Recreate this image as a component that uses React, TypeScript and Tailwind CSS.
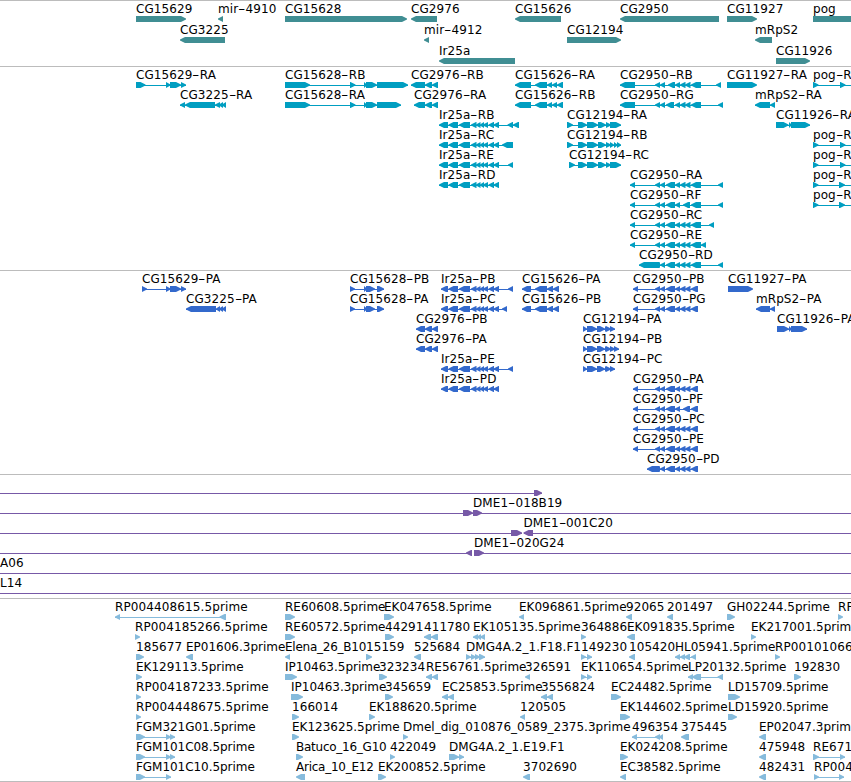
import React from 'react';
import { clsx } from 'clsx';

type Strand = '+' | '-';

// [label, strand, exon start/end pairs]
type Feature = [string, Strand, number[]];

interface TrackData {
  name: string;
  color: string;
  rowClass: string;
  lastClass?: string;
  rows: Feature[][];
}

const VIEW_WIDTH = 851;

// Exons shared between several isoforms
const ir25aCore = [448.5, 458, 459, 470, 471, 476.5, 476, 480.5, 480, 484, 483, 488, 488.5, 494, 493.5, 499];
const cg2950Core = [655, 660, 660, 665, 666, 675, 675, 680, 680, 685.5, 685, 690.5];
const cg2950F = [655, 660, 660, 665, 666, 675, 675, 680, 683, 690];
const cg12194Core = [578, 587, 587, 598, 598, 606, 606, 611];
const cg15626Rna = [515, 531, 535, 547, 547, 552, 552, 557, 557, 563];
const cg15626Cds = [522, 531, 535, 547, 547, 553, 553, 559];
const cg15628Cds = [350, 355, 364, 367, 366, 375, 377, 384];
const cg12194Cds = [583, 587, 587, 597, 597, 605, 605, 608, 606, 611, 610, 615];
const cg2950Cds = [633, 638, ...cg2950Core, 691, 698];

const genes: Feature[][] = [
  [
    ['CG15629', '+', [136, 186]],
    ['mir-4910', '-', [218, 223]],
    ['CG15628', '+', [285, 407]],
    ['CG2976', '-', [411, 437]],
    ['CG15626', '-', [515, 561]],
    ['CG2950', '-', [620, 719]],
    ['CG11927', '+', [727, 757]],
    ['pog', '+', [813, 870]],
  ],
  [
    ['CG3225', '-', [180, 225]],
    ['mir-4912', '-', [424, 429]],
    ['CG12194', '+', [567, 621]],
    ['mRpS2', '-', [755, 772]],
  ],
  [
    ['Ir25a', '-', [439, 515]],
    ['CG11926', '+', [776, 810]],
  ],
];

const transcripts: Feature[][] = [
  [
    ['CG15629-RA', '+', [136, 145.5, 166, 170.5, 170, 181, 181, 186]],
    ['CG15628-RB', '+', [285, 310, 350, 355.5, 364, 367, 366, 377, 377, 408]],
    ['CG2976-RB', '-', [411, 425, 425, 432, 432, 438]],
    ['CG15626-RA', '-', cg15626Rna],
    ['CG2950-RB', '-', [620, 635, 655, 660, 660, 665, 668, 675, 675, 680, 680, 685.5, 685, 690.5, 691, 701, 716, 721]],
    ['CG11927-RA', '+', [727, 757]],
    ['pog-RA', '+', [813, 818.5, 840, 845.5, 870, 880]],
  ],
  [
    ['CG3225-RA', '-', [180, 185, 185, 215, 215, 220, 219, 223, 222, 226]],
    ['CG15628-RA', '+', [285, 310, 350, 355.5, 364, 367, 366, 377, 377, 401]],
    ['CG2976-RA', '-', [414, 425, 425, 432, 432, 438]],
    ['CG15626-RB', '-', cg15626Rna],
    ['CG2950-RG', '-', [620, 635, 655, 660, 660, 665, 666, 674, 675, 680, 680, 685.5, 685, 690.5, 691, 701, 718, 723]],
    ['mRpS2-RA', '-', [755, 770, 770, 775]],
  ],
  [
    ['Ir25a-RB', '-', [439, 448, ...ir25aCore, 507.5, 513, 513, 519]],
    ['CG12194-RA', '+', [567, 573, ...cg12194Core, 610, 621]],
    ['CG11926-RA', '+', [776, 788.5, 789, 791.5, 791, 810]],
  ],
  [
    ['Ir25a-RC', '-', [439, 448, ...ir25aCore, 502, 513]],
    ['CG12194-RB', '+', [567, 573, ...cg12194Core, 610, 614, 614, 617.5, 617, 621]],
    ['pog-RB', '+', [813, 818.5, 840, 845.5, 870, 880]],
  ],
  [
    ['Ir25a-RE', '-', [439, 448, ...ir25aCore, 508, 513]],
    ['CG12194-RC', '+', [569, 575, ...cg12194Core, 610, 621]],
    ['pog-RC', '+', [813, 818.5, 840, 845.5, 870, 880]],
  ],
  [
    ['Ir25a-RD', '-', [439, 448, ...ir25aCore]],
    ['CG2950-RA', '-', [630, 635, ...cg2950Core, 691, 701, 718, 723]],
    ['pog-RD', '+', [813, 818.5, 839, 845, 870, 880]],
  ],
  [
    ['CG2950-RF', '-', [630, 635, ...cg2950F, 691, 701, 718, 723]],
    ['pog-RE', '+', [813, 818.5, 839, 845, 870, 880]],
  ],
  [['CG2950-RC', '-', [630, 635, ...cg2950Core, 691, 701, 709, 714]]],
  [['CG2950-RE', '-', [630, 635, ...cg2950Core, 691, 701, 701, 706]]],
  [['CG2950-RD', '-', [639, 659, ...cg2950Core, 691, 701, 718, 723]]],
];

const cds: Feature[][] = [
  [
    ['CG15629-PA', '+', [142, 147, 166, 170.5, 170, 181, 181, 186]],
    ['CG15628-PB', '+', cg15628Cds],
    ['Ir25a-PB', '-', [441, 448, ...ir25aCore, 508, 513]],
    ['CG15626-PA', '-', cg15626Cds],
    ['CG2950-PB', '-', cg2950Cds],
    ['CG11927-PA', '+', [728, 753]],
  ],
  [
    ['CG3225-PA', '-', [186, 216, 216, 220, 219, 223, 222, 226]],
    ['CG15628-PA', '+', cg15628Cds],
    ['Ir25a-PC', '-', [441, 448, ...ir25aCore, 502, 507]],
    ['CG15626-PB', '-', cg15626Cds],
    ['CG2950-PG', '-', cg2950Cds],
    ['mRpS2-PA', '-', [756, 770, 770, 775]],
  ],
  [
    ['CG2976-PB', '-', [416, 425, 425, 432, 432, 438]],
    ['CG12194-PA', '+', cg12194Cds],
    ['CG11926-PA', '+', [777, 789, 789, 791.5, 791, 807]],
  ],
  [
    ['CG2976-PA', '-', [416, 425, 425, 432, 432, 438]],
    ['CG12194-PB', '+', [...cg12194Cds, 614, 619]],
  ],
  [
    ['Ir25a-PE', '-', [441, 448, ...ir25aCore, 508, 513]],
    ['CG12194-PC', '+', cg12194Cds],
  ],
  [
    ['Ir25a-PD', '-', [441, 448, ...ir25aCore]],
    ['CG2950-PA', '-', cg2950Cds],
  ],
  [['CG2950-PF', '-', [633, 638, ...cg2950F, 691, 698]]],
  [['CG2950-PC', '-', cg2950Cds]],
  [['CG2950-PE', '-', cg2950Cds]],
  [['CG2950-PD', '-', [647, 659, ...cg2950Core, 691, 698]]],
];

// Clones run past both edges of the view
const clones: Feature[][] = [
  [['', '+', [-20, -10, 534, 542]]],
  [
    ['', '+', [-20, -10, 463, 473]],
    ['DME1-018B19', '+', [473, 482, 870, 880]],
  ],
  [
    ['', '+', [-20, -10, 511, 522]],
    ['DME1-001C20', '-', [523.5, 533, 870, 880]],
  ],
  [
    ['', '-', [-20, -10, 466, 472]],
    ['DME1-020G24', '+', [474, 484, 870, 880]],
  ],
  [['A06', '+', [0, 0, 870, 880]]],
  [['L14', '+', [0, 0, 870, 880]]],
];

const ests: Feature[][] = [
  [
    ['RP004408615.5prime', '-', [115, 120, 219.5, 226]],
    ['RE60608.5prime', '+', [285, 295]],
    ['EK047658.5prime', '+', [384, 394]],
    ['EK096861.5prime', '-', [519, 524]],
    ['92065', '-', [626, 632]],
    ['201497', '-', [667, 673]],
    ['GH02244.5prime', '+', [727, 735]],
    ['RP', '+', [838, 843]],
  ],
  [
    ['RP004185266.5prime', '+', [135, 140]],
    ['RE60572.5prime', '+', [285, 295]],
    ['44291', '+', [385, 394]],
    ['411780', '-', [424, 431, 431, 438]],
    ['EK105135.5prime', '-', [473, 478, 477, 481, 480, 485]],
    ['364886', '+', [581, 586]],
    ['EK091835.5prime', '-', [627, 635]],
    ['EK217001.5prime', '+', [751, 756]],
  ],
  [
    ['185677', '+', [136, 144]],
    ['EP01606.3prime', '-', [186, 193]],
    ['Elena_26_B10', '-', [285, 290]],
    ['15159', '+', [366, 372]],
    ['525684', '-', [414, 421]],
    ['DMG4A.2_1.F18.F1', '+', [466, 471, 471, 476, 475, 480, 479, 485]],
    ['149230', '+', [581, 586, 587, 592]],
    ['105420', '-', [629, 635]],
    ['HL05941.5prime', '-', [675, 680, 680, 685, 684, 690, 691, 696]],
    ['RP00101066', '+', [775, 780]],
  ],
  [
    ['EK129113.5prime', '+', [136, 142]],
    ['IP10463.5prime', '+', [285, 297]],
    ['323234', '+', [379, 387]],
    ['RE56761.5prime', '-', [426, 432, 432, 438]],
    ['326591', '-', [525, 530]],
    ['EK110654.5prime', '+', [581, 586, 587, 592]],
    ['LP20132.5prime', '-', [688, 693, 692, 701, 717.5, 723]],
    ['192830', '+', [794, 801]],
  ],
  [
    ['RP004187233.5prime', '+', [136, 141]],
    ['IP10463.3prime', '+', [291, 303]],
    ['345659', '+', [385, 393]],
    ['EC25853.5prime', '-', [442, 448, 448, 454]],
    ['3556824', '-', [541, 547, 547, 553]],
    ['EC24482.5prime', '+', [611, 621]],
    ['LD15709.5prime', '+', [728, 740]],
  ],
  [
    ['RP004448675.5prime', '+', [136, 141]],
    ['166014', '+', [292, 299]],
    ['EK188620.5prime', '+', [369, 375]],
    ['120505', '-', [520, 525]],
    ['EK144602.5prime', '+', [620, 630]],
    ['LD15920.5prime', '+', [728, 737]],
  ],
  [
    ['FGM321G01.5prime', '+', [136, 145, 166, 171, 170, 175]],
    ['EK123625.5prime', '+', [292, 299]],
    ['Dmel_dig_010876_0589_2375.3prime', '+', [403, 408]],
    ['496354', '-', [632, 637, 655, 660, 659, 663]],
    ['375445', '-', [681, 689]],
    ['EP02047.3prime', '-', [759, 766]],
  ],
  [
    ['FGM101C08.5prime', '+', [136, 145, 166, 171, 170, 175]],
    ['Batuco_16_G10', '+', [296, 303]],
    ['422049', '+', [390, 395]],
    ['DMG4A.2_1.E19.F1', '+', [449, 459, 459, 464]],
    ['EK024208.5prime', '+', [620, 628]],
    ['475948', '-', [759, 766]],
    ['RE671', '+', [813, 819, 840, 845]],
  ],
  [
    ['FGM101C10.5prime', '+', [136, 145, 166, 171]],
    ['Arica_10_E12', '-', [296, 305]],
    ['EK200852.5prime', '+', [378, 386]],
    ['3702690', '-', [523, 530]],
    ['EC38582.5prime', '-', [620, 626]],
    ['482431', '-', [759, 766]],
    ['RP004', '+', [814, 819, 839, 844]],
  ],
];

const tracks: TrackData[] = [
  { name: 'genes', color: 'text-[#408e93]', rowClass: 'h-[21px]', rows: genes },
  { name: 'transcripts', color: 'text-[#009ec1]', rowClass: 'h-5', lastClass: 'pb-px', rows: transcripts },
  { name: 'cds', color: 'text-[#3369cc]', rowClass: 'h-5', lastClass: 'pb-px', rows: cds },
  { name: 'clones', color: 'text-[#7759a7]', rowClass: 'h-5', lastClass: 'pb-px', rows: clones },
  { name: 'ests', color: 'text-[#86bbdc]', rowClass: 'h-5', rows: ests },
];

function arrowPoints(start: number, end: number, strand: Strand) {
  const head = Math.min(end - start, 5);
  if (strand === '+') {
    return `${start},0 ${end - head},0 ${end},2.5 ${end},3.5 ${end - head},6 ${start},6`;
  }
  return `${end},0 ${start + head},0 ${start},2.5 ${start},3.5 ${start + head},6 ${end},6`;
}

function trackingFor(label: string) {
  if (/^[A-Z][a-z]+_\d+_/.test(label)) return 'tracking-[-0.25px]';
  if (label.startsWith('FGM')) return 'tracking-[-0.05px]';
  if (label.startsWith('RP')) return 'tracking-[0.12px]';
  if (label.endsWith('prime')) return 'tracking-[0px]';
  return 'tracking-[0.07px]';
}

function Label({ text, x }: { text: string; x: number }) {
  const [head, tail] = text.split('-');

  return (
    <span className={clsx('absolute top-0 whitespace-pre', trackingFor(text))} style={{ left: x }}>
      {head}
      {tail && <span className="inline-block origin-left scale-x-[1.7] mr-[3px]">-</span>}
      {tail}
    </span>
  );
}

function Glyph({ strand, exons }: { strand: Strand; exons: number[] }) {
  const arrows: string[] = [];
  for (let i = 0; i < exons.length; i += 2) {
    arrows.push(arrowPoints(exons[i], exons[i + 1], strand));
  }
  const start = exons[0];
  const end = exons[exons.length - 1];

  return (
    <g>
      {exons.length > 2 && <rect x={start} y={3} width={end - start} height={1} shapeRendering="crispEdges" />}
      {arrows.map((points, i) => (
        <polygon key={i} points={points} />
      ))}
    </g>
  );
}

function Row({ features, className, color }: { features: Feature[]; className: string; color: string }) {
  return (
    <div className={clsx('flex flex-col', className)}>
      <div className="relative h-[13px]">
        {features
          .filter(([label]) => label)
          .map(([label, , exons]) => (
            <Label key={label} text={label} x={exons[0]} />
          ))}
      </div>
      <svg className={clsx('block h-1.5 shrink-0', color)} width={VIEW_WIDTH} height={6} fill="currentColor">
        {features.map(([, strand, exons], i) => (
          <Glyph key={i} strand={strand} exons={exons} />
        ))}
      </svg>
    </div>
  );
}

export default function App() {
  return (
    <div className="w-[851px] h-[782px] overflow-hidden bg-white text-black text-[12px] leading-[13px] font-['DejaVu_Sans',sans-serif]">
      {tracks.map(track => (
        <section key={track.name} className={clsx('border-t border-[#bcbcbc] pt-0.5', track.lastClass)}>
          {track.rows.map((features, i) => (
            <Row key={i} features={features} className={track.rowClass} color={track.color} />
          ))}
        </section>
      ))}
      <div className="border-t border-[#bcbcbc]" />
    </div>
  );
}
